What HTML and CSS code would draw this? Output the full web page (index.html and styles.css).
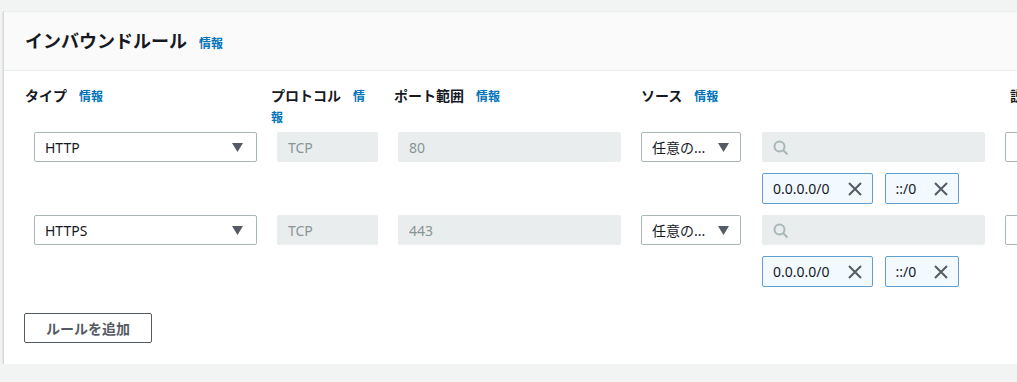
FILE: index.html
```html
<!DOCTYPE html>
<html lang="ja">
<head>
  <meta charset="utf-8" />
  <title>インバウンドルール</title>
  <link rel="stylesheet" href="styles.css">
</head>
<body>
  <div class="card">
    <div class="card-header">
      <h2 class="card-title">インバウンドルール</h2>
      <a class="info-link">情報</a>
    </div>

    <div class="card-body">
      <div class="labels">
        <div class="label label-type">タイプ<a class="info-link">情報</a></div>
        <div class="label label-proto">プロトコル<a class="info-link">情報</a></div>
        <div class="label label-port">ポート範囲<a class="info-link">情報</a></div>
        <div class="label label-source">ソース<a class="info-link">情報</a></div>
        <div class="label label-desc">説明 - オプション<a class="info-link">情報</a></div>
      </div>

      <div class="rule-row">
        <div class="select col-type">HTTP<svg class="caret" width="11" height="9" viewBox="0 0 11 9"><polygon points="0,0 11,0 5.5,9" /></svg></div>
        <div class="input disabled col-proto">TCP</div>
        <div class="input disabled col-port">80</div>
        <div class="select col-source">任意の...<svg class="caret" width="11" height="9" viewBox="0 0 11 9"><polygon points="0,0 11,0 5.5,9" /></svg></div>
        <div class="col-cidr">
          <div class="input disabled search">
            <svg width="16" height="16" viewBox="0 0 16 16"><circle cx="6.5" cy="6.5" r="5" /><line x1="10.2" y1="10.2" x2="14.5" y2="14.5" /></svg>
          </div>
          <div class="tokens">
            <div class="token">0.0.0.0/0<svg class="dismiss" width="14" height="14" viewBox="0 0 14 14"><path d="M1 1 L13 13 M13 1 L1 13" /></svg></div>
            <div class="token">::/0<svg class="dismiss" width="14" height="14" viewBox="0 0 14 14"><path d="M1 1 L13 13 M13 1 L1 13" /></svg></div>
          </div>
        </div>
        <div class="input col-desc"></div>
      </div>

      <div class="rule-row">
        <div class="select col-type">HTTPS<svg class="caret" width="11" height="9" viewBox="0 0 11 9"><polygon points="0,0 11,0 5.5,9" /></svg></div>
        <div class="input disabled col-proto">TCP</div>
        <div class="input disabled col-port">443</div>
        <div class="select col-source">任意の...<svg class="caret" width="11" height="9" viewBox="0 0 11 9"><polygon points="0,0 11,0 5.5,9" /></svg></div>
        <div class="col-cidr">
          <div class="input disabled search">
            <svg width="16" height="16" viewBox="0 0 16 16"><circle cx="6.5" cy="6.5" r="5" /><line x1="10.2" y1="10.2" x2="14.5" y2="14.5" /></svg>
          </div>
          <div class="tokens">
            <div class="token">0.0.0.0/0<svg class="dismiss" width="14" height="14" viewBox="0 0 14 14"><path d="M1 1 L13 13 M13 1 L1 13" /></svg></div>
            <div class="token">::/0<svg class="dismiss" width="14" height="14" viewBox="0 0 14 14"><path d="M1 1 L13 13 M13 1 L1 13" /></svg></div>
          </div>
        </div>
        <div class="input col-desc"></div>
      </div>

      <button class="add-button">ルールを追加</button>
    </div>
  </div>
</body>
</html>
```

FILE: styles.css
```css
*, *::before, *::after {
  box-sizing: border-box;
}

body {
  margin: 0;
  padding: 11px 0 0 3px;
  background: #f2f3f3;
  font-family: "Noto Sans", "Noto Sans CJK JP", sans-serif;
  color: #16191f;
  overflow: hidden;
}

.card {
  width: 1200px;
  background: white;
  border-top: 1px solid #eaeded;
  border-left: 1px solid #d5dbdb;
  box-shadow: 0 1px 1px 0 rgba(0, 28, 36, 0.3);
}

.card-header {
  display: flex;
  align-items: center;
  height: 59px;
  padding: 0 21px;
  background: #fafafa;
  border-bottom: 1px solid #eaeded;
}

.card-title {
  margin: 0;
  font-size: 18px;
  font-weight: 700;
  line-height: 22px;
}

.card-header .info-link {
  margin-left: 12px;
  margin-top: 3px;
}

.info-link {
  margin-left: 12px;
  color: #0073bb;
  font-size: 12px;
  font-weight: 700;
  cursor: pointer;
}

.card-body {
  padding: 15px 21px 21px;
}

.labels {
  display: flex;
  margin-bottom: 4px;
}

.label {
  flex-shrink: 0;
  font-size: 14px;
  font-weight: 700;
  line-height: 20px;
}

.label-type { width: 246px; }
.label-proto { width: 100px; margin-right: 23px; }
.label-port { width: 247px; }
.label-source { width: 369px; }
.label-desc { white-space: nowrap; }

.rule-row {
  display: flex;
  align-items: flex-start;
  gap: 20px;
  padding-left: 9px;
  margin-bottom: 11px;
}

.rule-row > * {
  flex-shrink: 0;
}

.input, .select {
  height: 30px;
  display: flex;
  align-items: center;
  padding: 0 10px;
  font-size: 14px;
  border: 1px solid #aab7b8;
  border-radius: 2px;
  background: white;
}

.input.disabled {
  background: #eaeded;
  border-color: #eaeded;
  color: #879596;
}

.select {
  justify-content: space-between;
  padding-right: 13px;
}

.caret {
  fill: #545b64;
}

.col-type { width: 223px; }
.col-proto { width: 101px; }
.col-port { width: 223px; }
.col-source { width: 100px; padding-right: 11px; margin-right: 1px; }
.col-cidr { width: 223px; }
.col-desc { width: 200px; }

.search svg {
  fill: none;
  stroke: #aab7b8;
  stroke-width: 2;
  margin-top: 1px;
}

.tokens {
  display: flex;
  gap: 12px;
  margin-top: 11px;
}

.token {
  display: flex;
  align-items: center;
  height: 31px;
  padding: 0 10px 0 10px;
  gap: 18px;
  font-size: 14px;
  background: #f2f9ff;
  border: 1px solid #5f9fd3;
  border-radius: 2px;
  white-space: nowrap;
}

.dismiss {
  fill: none;
  stroke: #545b64;
  stroke-width: 2;
}

.add-button {
  display: block;
  width: 128px;
  height: 30px;
  margin: 26px 0 0 -1px;
  padding: 0;
  font-family: inherit;
  font-size: 14px;
  font-weight: 700;
  color: #545b64;
  background: white;
  border: 1px solid #545b64;
  border-radius: 2px;
}
```
